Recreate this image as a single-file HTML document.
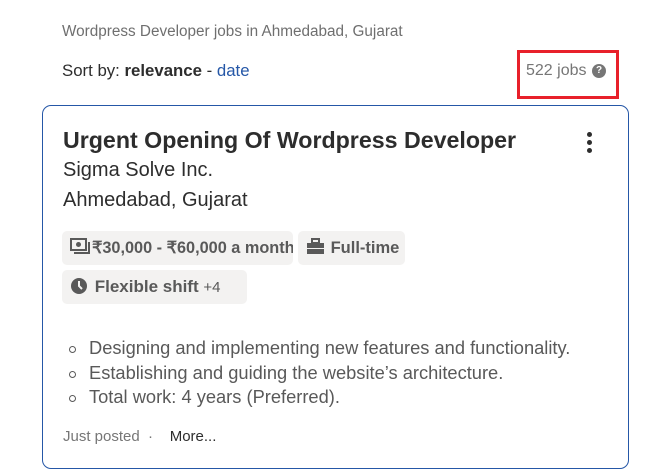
<!DOCTYPE html>
<html><head><meta charset="utf-8"><style>
*{margin:0;padding:0;box-sizing:border-box}
body{width:660px;height:469px;background:#fff;font-family:"Liberation Sans",sans-serif;position:relative;overflow:hidden;color:#2d2d2d}
.a{position:absolute;white-space:nowrap}
.card{position:absolute;left:42px;top:105px;width:587px;height:364px;border:1px solid #2557a7;border-radius:9px}
.chip{position:absolute;background:#f3f2f1;border-radius:5px;height:34px;font-weight:bold;font-size:17px;color:#595959;line-height:34px;padding-left:8px;white-space:nowrap;overflow:hidden}
ul{position:absolute;left:68px;top:336px;list-style:none;font-size:18.3px;color:#595959;line-height:24.5px}
ul li{position:relative;padding-left:21px;white-space:nowrap}
ul li:before{content:"";position:absolute;left:1px;top:10px;width:5px;height:5px;border:1px solid #595959;border-radius:50%}
</style></head><body>
<div class="a" style="left:62px;top:23px;font-size:15.3px;color:#6f6f6f">Wordpress Developer jobs in Ahmedabad, Gujarat</div>
<div class="a" style="left:62px;top:61px;font-size:16.8px;color:#2d2d2d">Sort by: <b>relevance</b> - <span style="color:#2557a7">date</span></div>
<div class="a" style="left:517px;top:50px;width:102px;height:49px;border:3px solid #e8202a"></div>
<div class="a" style="left:526px;top:62px;font-size:16px;color:#767676">522 jobs</div>
<div class="a" style="left:592px;top:64px;width:14px;height:14px;border-radius:50%;background:#767676;color:#fff;font-size:10px;font-weight:bold;text-align:center;line-height:14px">?</div>
<div class="card"></div>
<div class="a" style="left:63px;top:127px;font-size:23.2px;font-weight:bold;color:#2d2d2d">Urgent Opening Of Wordpress Developer</div>
<div class="a" style="left:587px;top:132px;width:5px"><div style="width:5px;height:5px;border-radius:50%;background:#2d2d2d;margin-bottom:3px"></div><div style="width:5px;height:5px;border-radius:50%;background:#2d2d2d;margin-bottom:3px"></div><div style="width:5px;height:5px;border-radius:50%;background:#2d2d2d"></div></div>
<div class="a" style="left:63px;top:159px;font-size:20px">Sigma Solve Inc.</div>
<div class="a" style="left:63px;top:189px;font-size:20px">Ahmedabad, Gujarat</div>
<div class="chip" style="left:62px;top:231px;width:231px;font-size:16.3px"><svg width="22" height="18" viewBox="0 0 22 18" style="vertical-align:-3px"><rect x="1" y="1" width="15" height="11" fill="none" stroke="#595959" stroke-width="2"/><circle cx="8.5" cy="6.5" r="2.5" fill="#595959"/><path d="M19 4v11H4" fill="none" stroke="#595959" stroke-width="2"/></svg>₹30,000 - ₹60,000 a month</div>
<div class="chip" style="left:298px;top:231px;width:107px;font-size:16.5px"><svg width="20" height="17" viewBox="0 0 20 17" style="vertical-align:-2px"><rect x="6" y="1" width="7" height="4" fill="none" stroke="#595959" stroke-width="2"/><rect x="1" y="5" width="17" height="5" fill="#595959"/><rect x="1" y="11" width="17" height="5" fill="#595959"/></svg> Full-time</div>
<div class="chip" style="left:62px;top:270px;width:185px"><svg width="20" height="18" viewBox="0 0 20 18" style="vertical-align:-3px"><circle cx="9" cy="9" r="8" fill="#595959"/><path d="M9 4v5l3 3" fill="none" stroke="#f3f2f1" stroke-width="2"/></svg> Flexible shift <span style="font-weight:normal;font-size:15px">+4</span></div>
<ul><li>Designing and implementing new features and functionality.</li><li>Establishing and guiding the website’s architecture.</li><li>Total work: 4 years (Preferred).</li></ul>
<div class="a" style="left:63px;top:428px;font-size:15px;color:#767676">Just posted &nbsp;·&nbsp;&nbsp;&nbsp; <span style="color:#2d2d2d">More...</span></div>
</body></html>
